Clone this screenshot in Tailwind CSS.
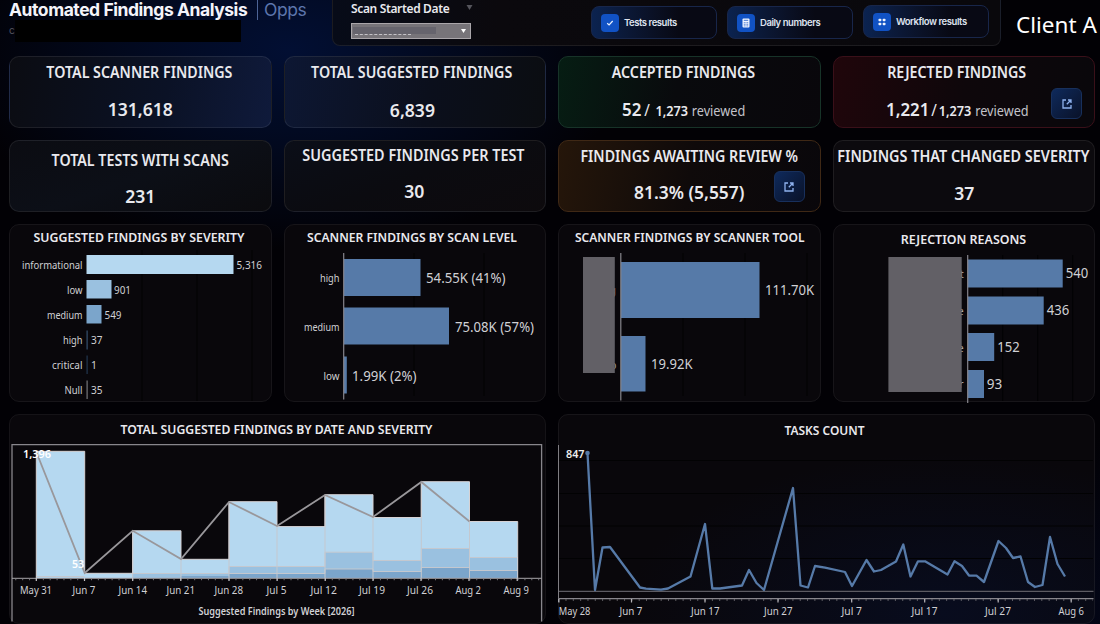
<!DOCTYPE html>
<html lang="en">
  <head>
    <meta charset="UTF-8" />
    <meta name="viewport" content="width=device-width, initial-scale=1.0" />
    <title>Automated Findings Analysis</title>
    <script src="https://cdn.jsdelivr.net/npm/@tailwindcss/browser@4"></script>
  </head>
  <body
    class="w-[1100px] h-[624px] overflow-hidden bg-[#020105] bg-[radial-gradient(ellipse_340px_200px_at_290px_50px,#020f33_0%,#020a22_40%,transparent_100%),radial-gradient(ellipse_420px_200px_at_960px_624px,#03071c_0%,transparent_100%)] text-[#e9e9ee] font-['Noto_Sans',sans-serif]"
  >
    <!-- Header -->
    <header class="flex h-[56px] pl-[9px]">
      <div class="w-[323px] shrink-0 font-[Inter,sans-serif]">
        <div class="flex items-center h-5 whitespace-nowrap">
          <h1 class="w-[238px] text-[17.5px] leading-5 font-bold tracking-[-0.45px] text-[#f4f4fa]">Automated Findings Analysis</h1>
          <span class="ml-[10px] w-px h-5 bg-[#4d6496]"></span>
          <span class="ml-[6px] text-[17.5px] leading-5 tracking-[-0.4px] text-[#5d76ad]">Opps</span>
        </div>
        <div class="flex h-[22px]">
          <span class="w-[6px] text-[10px] leading-5 text-[#55555f]">c</span>
          <span class="w-[226px] bg-black"></span>
        </div>
      </div>

      <!-- Filter and links -->
      <div class="flex w-[669px] h-[46px] shrink-0 rounded-b-lg border-x border-b border-white/8 bg-[linear-gradient(90deg,#070b18,#0b090d_25%,#09080c)]">
        <div class="w-[240px] pl-[18px]">
          <div class="flex h-[23px]">
            <span class="w-[115px] text-[12px] leading-[18px] font-semibold tracking-[-0.35px] whitespace-nowrap">Scan Started Date</span>
            <svg class="mt-[5px] shrink-0" width="7" height="5" viewBox="0 0 6 5"><path d="M0 0h6L3 5z" fill="#55555c" /></svg>
          </div>
          <div class="flex items-start w-[120px] h-4 border border-[#aaa6aa] bg-[#777479]">
            <div class="mt-[3px] ml-px w-[83px] h-[8px]">
              <div class="h-[7px] bg-[#66646d]"></div>
              <div class="ml-[2px] w-[56px] border-t border-dashed border-[#c5c3c8]"></div>
            </div>
            <svg class="ml-[25px] mt-[5px]" width="5" height="4" viewBox="0 0 5 4"><path d="M0 0h5L2.5 4z" fill="#fff" /></svg>
          </div>
        </div>
        <nav class="flex gap-[10px] pl-[18px] pt-[6px] font-[Inter,sans-serif] text-[9.5px] font-semibold text-[#dfe3ef]">
          <a class="flex items-center w-[126px] h-[33px] pl-[9px] rounded-lg border border-[#18264a] bg-linear-to-r from-[#0b2350] to-[#080914] to-70%">
            <span class="grid place-items-center size-[18px] rounded bg-[#1152c4]">
              <svg width="8" height="8" viewBox="0 0 8 8" fill="none" stroke="#e8f0ff" stroke-width="1.2"><path d="M1.2 4.2l1.9 1.8 3.6-4" /></svg>
            </span>
            <span class="ml-[5px] pt-px whitespace-nowrap tracking-[-0.45px]">Tests results</span>
          </a>
          <a class="flex items-center w-[126px] h-[33px] pl-[9px] rounded-lg border border-[#18264a] bg-linear-to-r from-[#0b2350] to-[#080914] to-70%">
            <span class="grid place-items-center size-[18px] rounded bg-[#1152c4]">
              <svg width="8" height="10" viewBox="0 0 8 10"><rect x=".5" y=".5" width="7" height="9" rx="1" fill="#f1f5ff" /><path d="M1.8 2.3h4.4M1.8 4.7h1M3.5 4.7h1M5.2 4.7h1M1.8 6.3h1M3.5 6.3h1M5.2 6.3h1M1.8 7.9h1M3.5 7.9h1M5.2 7.9h1" stroke="#1152c4" stroke-width=".8" /></svg>
            </span>
            <span class="ml-[5px] pt-px whitespace-nowrap tracking-[-0.45px]">Daily numbers</span>
          </a>
          <a class="flex items-center w-[126px] h-[33px] pl-[9px] -mt-px rounded-lg border border-[#18264a] bg-linear-to-r from-[#0b2350] to-[#080914] to-70%">
            <span class="grid place-items-center size-[18px] rounded bg-[#1152c4]">
              <svg width="8" height="8" viewBox="0 0 8 8" fill="#f1f5ff"><rect x=".5" y=".8" width="2.8" height="2.5" rx=".8" /><rect x="4.7" y=".8" width="2.8" height="2.5" rx=".8" /><rect x=".5" y="4.8" width="2.8" height="2.5" rx=".8" /><rect x="4.7" y="4.8" width="2.8" height="2.5" rx=".8" /></svg>
            </span>
            <span class="ml-[5px] pt-px whitespace-nowrap tracking-[-0.45px]">Workflow results</span>
          </a>
        </nav>
      </div>
      <div class="pl-[15px] pt-[10px] text-[22.5px] leading-[30px] text-white whitespace-nowrap">Client A</div>
    </header>

    <main class="grid grid-cols-4 grid-rows-[72px_72px_178px_210px] gap-x-3 gap-y-3 pl-[9px] pr-[5px]">
      <!-- Totals -->
      <section class="rounded-[10px] border border-white/8 bg-[linear-gradient(100deg,#0b0c12,#0b1226_60%,#0f1a3b)] text-center font-semibold whitespace-nowrap">
        <h2 class="pt-[5px] pr-[2px] text-[16px] leading-5 scale-x-[.89]">TOTAL SCANNER FINDINGS</h2>
        <p class="pt-[17px] text-[18.5px] leading-5 scale-x-[.95]">131,618</p>
      </section>
      <section class="rounded-[10px] border border-white/8 bg-[linear-gradient(100deg,#0d1733,#0b0f1c_55%,#0b0d11)] text-center font-semibold whitespace-nowrap">
        <h2 class="pt-[5px] pr-[8px] text-[16px] leading-5 scale-x-[.89]">TOTAL SUGGESTED FINDINGS</h2>
        <p class="pt-[18px] pr-[6px] text-[18.5px] leading-5 scale-x-[.95]">6,839</p>
      </section>
      <section class="rounded-[10px] border border-[#173328] bg-[linear-gradient(100deg,#061d13,#090a0d_45%,#09070b)] text-center font-semibold whitespace-nowrap">
        <h2 class="pt-[5px] pr-[13px] text-[16px] leading-5 scale-x-[.89]">ACCEPTED FINDINGS</h2>
        <p class="flex items-baseline ml-[63px] pt-[17px] text-[13.5px] leading-5 origin-left scale-x-[.94]">
          <span class="text-[18px]">52</span><span class="ml-[3px] text-[16px] font-normal">/</span>
          <span class="ml-[6px]">1,273</span><span class="ml-[4px] font-normal text-[#c3c3ca]">reviewed</span>
        </p>
      </section>
      <section class="relative rounded-[10px] border border-[#3a1019] bg-[linear-gradient(100deg,#20060b,#0e070b_50%,#09070b)] text-center font-semibold whitespace-nowrap">
        <h2 class="pt-[5px] pr-[17px] text-[16px] leading-5 scale-x-[.89]">REJECTED FINDINGS</h2>
        <p class="flex items-baseline ml-[52px] pt-[17px] text-[13.5px] leading-5 origin-left scale-x-[.94]">
          <span class="text-[18px]">1,221</span><span class="ml-[2px] text-[16px] font-normal">/</span>
          <span class="ml-[2px]">1,273</span><span class="ml-[4px] font-normal text-[#c3c3ca]">reviewed</span>
        </p>
        <a class="absolute right-[12px] top-[31px] grid place-items-center size-[31px] rounded-md border border-[#18305c] bg-linear-to-br from-[#0e2a5c] to-[#091229]">
          <svg width="10" height="10" viewBox="0 0 10 10" fill="none" stroke="#8fb2ee" stroke-width="1.3"><path d="M4 1H1v8h8V6M6 1h3v3M9 1L4.8 5.2" /></svg>
        </a>
      </section>

      <section class="rounded-[10px] border border-white/8 bg-[linear-gradient(160deg,#0b0c12,#0c0f17_50%,#0b0b0e)] text-center font-semibold whitespace-nowrap">
        <h2 class="pt-[9px] text-[16px] leading-5 scale-x-[.89]">TOTAL TESTS WITH SCANS</h2>
        <p class="pt-[16px] text-[18.5px] leading-5 scale-x-[.95]">231</p>
      </section>
      <section class="rounded-[10px] border border-white/8 bg-[linear-gradient(160deg,#0b0e18,#0b0b10_50%,#0d0a0d)] text-center font-semibold whitespace-nowrap">
        <h2 class="flex justify-center -mx-3 pt-[4px] pr-[4px] text-[16px] leading-5 scale-x-[.9]">SUGGESTED FINDINGS PER TEST</h2>
        <p class="pt-[16px] pr-[2px] text-[18.5px] leading-5 scale-x-[.95]">30</p>
      </section>
      <section class="relative rounded-[10px] border border-[#3f2815] bg-[linear-gradient(100deg,#25160a,#0f0a0a_50%,#09070b)] text-center font-semibold whitespace-nowrap">
        <h2 class="pt-[5px] text-[16px] leading-5 scale-x-[.89]">FINDINGS AWAITING REVIEW %</h2>
        <p class="pt-[16px] text-[18.5px] leading-5 scale-x-[.94]">81.3% (5,557)</p>
        <a class="absolute right-[15px] top-[30px] grid place-items-center size-[31px] rounded-md border border-[#18305c] bg-linear-to-br from-[#0e2a5c] to-[#091229]">
          <svg width="10" height="10" viewBox="0 0 10 10" fill="none" stroke="#8fb2ee" stroke-width="1.3"><path d="M4 1H1v8h8V6M6 1h3v3M9 1L4.8 5.2" /></svg>
        </a>
      </section>
      <section class="rounded-[10px] border border-white/8 bg-[#0c0a0e] text-center font-semibold whitespace-nowrap">
        <h2 class="flex justify-center -mx-5 pt-[5px] pr-[2px] text-[16px] leading-5 scale-x-[.9]">FINDINGS THAT CHANGED SEVERITY</h2>
        <p class="pt-[17px] text-[18.5px] leading-5 scale-x-[.95]">37</p>
      </section>

      <!-- Suggested findings by severity -->
      <section class="rounded-[10px] bg-[#09070b] outline -outline-offset-1 outline-white/6">
        <svg class="block w-full h-full overflow-visible" viewBox="9 224 262.5 178" fill="#d0d0d4" font-size="10.5">
          <path d="M142 250V401M197 250V401M252 250V401" stroke="#020203" />
          <text x="33.5" y="242" font-size="13" font-weight="600" fill="#e9e9ee" textLength="211" lengthAdjust="spacingAndGlyphs">SUGGESTED FINDINGS BY SEVERITY</text>
          <rect x="86.5" y="255" width="147" height="19" fill="#b5d8f0" />
          <rect x="86.5" y="280" width="25" height="18.5" fill="#9ac1e0" />
          <rect x="86.5" y="305" width="15" height="18.5" fill="#7ba5cb" />
          <rect x="86.5" y="330.5" width="1.2" height="19" fill="#35506f" />
          <rect x="86.5" y="355.5" width="1.2" height="18.5" fill="#22364f" />
          <rect x="86.5" y="380.5" width="1.2" height="18.5" fill="#77777b" />
          <g text-anchor="end">
            <text x="82.5" y="269" textLength="60.5" lengthAdjust="spacingAndGlyphs">informational</text>
            <text x="82.5" y="294" textLength="15.5" lengthAdjust="spacingAndGlyphs">low</text>
            <text x="82.5" y="319" textLength="35.5" lengthAdjust="spacingAndGlyphs">medium</text>
            <text x="82.5" y="344" textLength="19.5" lengthAdjust="spacingAndGlyphs">high</text>
            <text x="82.5" y="369" textLength="30.5" lengthAdjust="spacingAndGlyphs">critical</text>
            <text x="82.5" y="394" textLength="18" lengthAdjust="spacingAndGlyphs">Null</text>
          </g>
          <text x="236.5" y="269" textLength="25.5" lengthAdjust="spacingAndGlyphs">5,316</text>
          <text x="114" y="294" textLength="17" lengthAdjust="spacingAndGlyphs">901</text>
          <text x="104.5" y="319" textLength="17" lengthAdjust="spacingAndGlyphs">549</text>
          <text x="91" y="344" textLength="11.5" lengthAdjust="spacingAndGlyphs">37</text>
          <text x="91" y="369">1</text>
          <text x="91" y="394" textLength="11.5" lengthAdjust="spacingAndGlyphs">35</text>
        </svg>
      </section>

      <!-- Scanner findings by scan level -->
      <section class="rounded-[10px] bg-[#09070b] outline -outline-offset-1 outline-white/6">
        <svg class="block w-full h-full overflow-visible" viewBox="284 224 262.5 178" fill="#d0d0d4" font-size="10.5">
          <path d="M414 253V396M484 253V396" stroke="#020203" />
          <text x="307" y="242" font-size="13" font-weight="600" fill="#e9e9ee" textLength="210" lengthAdjust="spacingAndGlyphs">SCANNER FINDINGS BY SCAN LEVEL</text>
          <g fill="#567aa8">
            <rect x="344" y="259" width="76.5" height="37" />
            <rect x="344" y="307.5" width="105" height="37" />
            <rect x="344" y="356.5" width="2.8" height="37" />
          </g>
          <path d="M343.7 253V399.5" stroke="#88868c" stroke-width="1.2" />
          <g text-anchor="end">
            <text x="339.5" y="282" textLength="19.5" lengthAdjust="spacingAndGlyphs">high</text>
            <text x="339.5" y="331" textLength="35.5" lengthAdjust="spacingAndGlyphs">medium</text>
            <text x="339.5" y="380" textLength="16" lengthAdjust="spacingAndGlyphs">low</text>
          </g>
          <g font-size="13.5">
            <text x="426" y="283" textLength="79.5" lengthAdjust="spacingAndGlyphs">54.55K (41%)</text>
            <text x="455" y="332" textLength="79" lengthAdjust="spacingAndGlyphs">75.08K (57%)</text>
            <text x="352" y="381" textLength="64.5" lengthAdjust="spacingAndGlyphs">1.99K (2%)</text>
          </g>
        </svg>
      </section>

      <!-- Scanner findings by scanner tool -->
      <section class="rounded-[10px] bg-[#09070b] outline -outline-offset-1 outline-white/6">
        <svg class="block w-full h-full overflow-visible" viewBox="558 224 262.5 178" fill="#d0d0d4" font-size="13.5">
          <path d="M683 253V396M745 253V396M807 253V396" stroke="#020203" />
          <text x="575" y="242" font-size="13" font-weight="600" fill="#e9e9ee" textLength="229.5" lengthAdjust="spacingAndGlyphs">SCANNER FINDINGS BY SCANNER TOOL</text>
          <g font-size="10.5" text-anchor="end" fill="#9b9ba0">
            <text x="616" y="294">g</text>
            <text x="616.5" y="369">p</text>
          </g>
          <rect x="583" y="257" width="31.8" height="116" fill="#626066" />
          <g fill="#567aa8">
            <rect x="621" y="262" width="138.5" height="56" />
            <rect x="621" y="336" width="24.5" height="55.5" />
          </g>
          <path d="M620.8 253V400.5" stroke="#88868c" stroke-width="1.2" />
          <text x="765" y="295" textLength="49" lengthAdjust="spacingAndGlyphs">111.70K</text>
          <text x="651" y="369" textLength="41.5" lengthAdjust="spacingAndGlyphs">19.92K</text>
        </svg>
      </section>

      <!-- Rejection reasons -->
      <section class="rounded-[10px] bg-[#09070b] outline -outline-offset-1 outline-white/6">
        <svg class="block w-full h-full overflow-visible" viewBox="833.3 224 262.5 178" fill="#d0d0d4" font-size="13.5">
          <path d="M1003 255V401M1038 255V401M1073 255V401" stroke="#020203" />
          <text x="901" y="244" font-size="13" font-weight="600" fill="#e9e9ee" textLength="125.5" lengthAdjust="spacingAndGlyphs">REJECTION REASONS</text>
          <g font-size="10.5" text-anchor="end" fill="#b0b0b5">
            <text x="964" y="278">t</text>
            <text x="964" y="315">e</text>
            <text x="964" y="352">e</text>
            <text x="964" y="388">r</text>
          </g>
          <rect x="888.7" y="257" width="73.3" height="135" fill="#626066" />
          <g fill="#567aa8">
            <rect x="968" y="259.5" width="95" height="28" />
            <rect x="968" y="296.5" width="76" height="28" />
            <rect x="968" y="333" width="26.5" height="28" />
            <rect x="968" y="370" width="16.3" height="28" />
          </g>
          <path d="M968 255V403" stroke="#88868c" stroke-width="1.2" />
          <text x="1066" y="278" textLength="22.5" lengthAdjust="spacingAndGlyphs">540</text>
          <text x="1047" y="315" textLength="22.5" lengthAdjust="spacingAndGlyphs">436</text>
          <text x="997.5" y="352" textLength="22.5" lengthAdjust="spacingAndGlyphs">152</text>
          <text x="987" y="389" textLength="15.5" lengthAdjust="spacingAndGlyphs">93</text>
        </svg>
      </section>

      <!-- Suggested findings by date and severity -->
      <section class="col-span-2 rounded-[10px] bg-[#09070b] outline -outline-offset-1 outline-white/5">
        <svg class="block w-full h-full overflow-visible" viewBox="9 414 537 210" fill="#d0d0d4" font-size="10.5">
          <text x="120.5" y="434" font-size="13" font-weight="600" fill="#e9e9ee" textLength="312" lengthAdjust="spacingAndGlyphs">TOTAL SUGGESTED FINDINGS BY DATE AND SEVERITY</text>
          <path d="M12 621.5V444.6H541.6V621.5" fill="none" stroke="#88868c" stroke-width="1.3" />
          <!-- informational -->
          <path fill="#b5d8f0" d="M36.3 578V451.3H84.7V573.3H132.7V530.8H181V559.3H229V501.7H277V526.6H325V494.7H373V517.5H421.3V481.7H469.5V521.5H517.7V578z" />
          <!-- low -->
          <path fill="#9ac1e0" d="M132.7 578V573.5H229V566.5H325V552.2H373V560.5H421.3V548.5H469.5V557.5H517.7V578z" />
          <!-- medium -->
          <path fill="#7ba5cb" d="M181 578V576H229V573.5H325V569H373V571.5H421.3V567.5H469.5V570.5H517.7V578z" />
          <path fill="none" stroke="#c4c8cf" d="M36.3 576.5H84.7M132.7 573.5H229V566.5H325V552.2H373V560.5H421.3V548.5H469.5V557.5H517.7M229 573.5H325V569H373V571.5H421.3V567.5H469.5V570.5H517.7M132.7 530.8V578M181 559V578M229 502V578M277 526V578M325 495V578M373 517V578M421.3 482V578M469.5 521V578" />
          <path fill="none" stroke="#d6d2d4" d="M36.3 578V451.3H84.7V573.3H132.7V530.8H181V559.3H229V501.7H277V526.6H325V494.7H373V517.5H421.3V481.7H469.5V521.5H517.7V578" />
          <path fill="none" stroke="#99979b" stroke-width="1.8" d="M36.3 452L84.7 573L132.7 530.8L181 559L229 502L277 526L325 495L373 517L421.3 482L469.5 521.5" />
          <path stroke="#a9a7ab" d="M12 578.3H541.6" />
          <path stroke="#77757a" stroke-width="1.6" stroke-dasharray="1 5.88" d="M15.3 579.5H541" />
          <path stroke="#c9c7cb" stroke-width="1.2" d="M36.3 578v3M84.5 578v3M132.7 578v3M180.8 578v3M229 578v3M277.1 578v3M325.2 578v3M373 578v3M421 578v3M469 578v3M517.2 578v3" />
          <g font-weight="600" fill="#fff">
            <text x="23" y="458" textLength="28" lengthAdjust="spacingAndGlyphs">1,396</text>
            <text x="72" y="568" textLength="12" lengthAdjust="spacingAndGlyphs">53</text>
          </g>
          <text x="20" y="594" textLength="32" lengthAdjust="spacingAndGlyphs">May 31</text>
          <text x="72.5" y="594" textLength="23" lengthAdjust="spacingAndGlyphs">Jun 7</text>
          <text x="118.5" y="594" textLength="28.5" lengthAdjust="spacingAndGlyphs">Jun 14</text>
          <text x="166.5" y="594" textLength="28.5" lengthAdjust="spacingAndGlyphs">Jun 21</text>
          <text x="214.5" y="594" textLength="28.5" lengthAdjust="spacingAndGlyphs">Jun 28</text>
          <text x="266.5" y="594" textLength="20" lengthAdjust="spacingAndGlyphs">Jul 5</text>
          <text x="310.5" y="594" textLength="26.5" lengthAdjust="spacingAndGlyphs">Jul 12</text>
          <text x="359" y="594" textLength="26" lengthAdjust="spacingAndGlyphs">Jul 19</text>
          <text x="407" y="594" textLength="26" lengthAdjust="spacingAndGlyphs">Jul 26</text>
          <text x="455.5" y="594" textLength="25.5" lengthAdjust="spacingAndGlyphs">Aug 2</text>
          <text x="503.5" y="594" textLength="25.5" lengthAdjust="spacingAndGlyphs">Aug 9</text>
          <text x="198.5" y="615" font-size="10" font-weight="600" textLength="156" lengthAdjust="spacingAndGlyphs">Suggested Findings by Week [2026]</text>
        </svg>
      </section>

      <!-- Tasks count -->
      <section class="col-span-2 rounded-[10px] bg-[#09070b] bg-[radial-gradient(ellipse_320px_160px_at_72%_95%,#080c1e,transparent)] outline -outline-offset-1 outline-white/6">
        <svg class="block w-full h-full overflow-visible" viewBox="558 414 537 210" fill="#d0d0d4" font-size="10.5">
          <text x="784.5" y="434.5" font-size="13" font-weight="600" fill="#e9e9ee" textLength="80" lengthAdjust="spacingAndGlyphs">TASKS COUNT</text>
          <path d="M559 460.5H1093M559 493.5H1093M559 526H1093M559 558.5H1093" stroke="#020203" stroke-width="1.2" />
          <path d="M558.5 445V602" stroke="#77757b" />
          <path d="M559 591.3H1093.5" stroke="#5c5b62" stroke-width="1.2" />
          <path d="M559 598.7H1093.5" stroke="#88868c" stroke-width="1.3" />
          <path d="M565.5 600H1093" stroke="#77757a" stroke-width="1.6" stroke-dasharray="1 6.32" />
          <path d="M558.9 599v3.5M631.5 599v3.5M705 599v3.5M778 599v3.5M851.7 599v3.5M924.7 599v3.5M998.2 599v3.5M1071.2 599v3.5" stroke="#b5b3b8" stroke-width="1.2" />
          <polyline
            fill="none"
            stroke="#567aa8"
            stroke-width="2.3"
            stroke-linejoin="round"
            points="587.5,453 595,590 602.5,547.5 610,547 640,587.5 646,588.7 661,589.7 668,588.5 690.5,576.5 705,524 712.3,588.5 720,588.5 742,585.5 749,570 756.5,583 764,590 793,488 800.5,585.5 808,587.5 815,566 825,567.7 845,572 852,586 866.5,560 874,571.5 881,570 896,561.5 903.3,544.5 910.5,576.5 918,561.3 925,561.3 947.5,574.5 954.5,561.3 962,566 969,575.5 976.5,575.7 984,582 998.5,541 1006,548 1013,558 1020.5,556.5 1028,582 1035,587 1042.5,585 1050,537 1057.5,564 1065,576.5"
          />
          <circle cx="587.5" cy="453" r="2.3" fill="#567aa8" />
          <text x="566" y="457.5" font-weight="600" fill="#eee" textLength="18.5" lengthAdjust="spacingAndGlyphs">847</text>
          <text x="558.8" y="614.5" textLength="31.5" lengthAdjust="spacingAndGlyphs">May 28</text>
          <text x="619.5" y="614.5" textLength="23" lengthAdjust="spacingAndGlyphs">Jun 7</text>
          <text x="691" y="614.5" textLength="28.5" lengthAdjust="spacingAndGlyphs">Jun 17</text>
          <text x="764" y="614.5" textLength="28.5" lengthAdjust="spacingAndGlyphs">Jun 27</text>
          <text x="841.5" y="614.5" textLength="20.5" lengthAdjust="spacingAndGlyphs">Jul 7</text>
          <text x="911.5" y="614.5" textLength="26" lengthAdjust="spacingAndGlyphs">Jul 17</text>
          <text x="985" y="614.5" textLength="26" lengthAdjust="spacingAndGlyphs">Jul 27</text>
          <text x="1058.5" y="614.5" textLength="25.5" lengthAdjust="spacingAndGlyphs">Aug 6</text>
        </svg>
      </section>
    </main>
  </body>
</html>
